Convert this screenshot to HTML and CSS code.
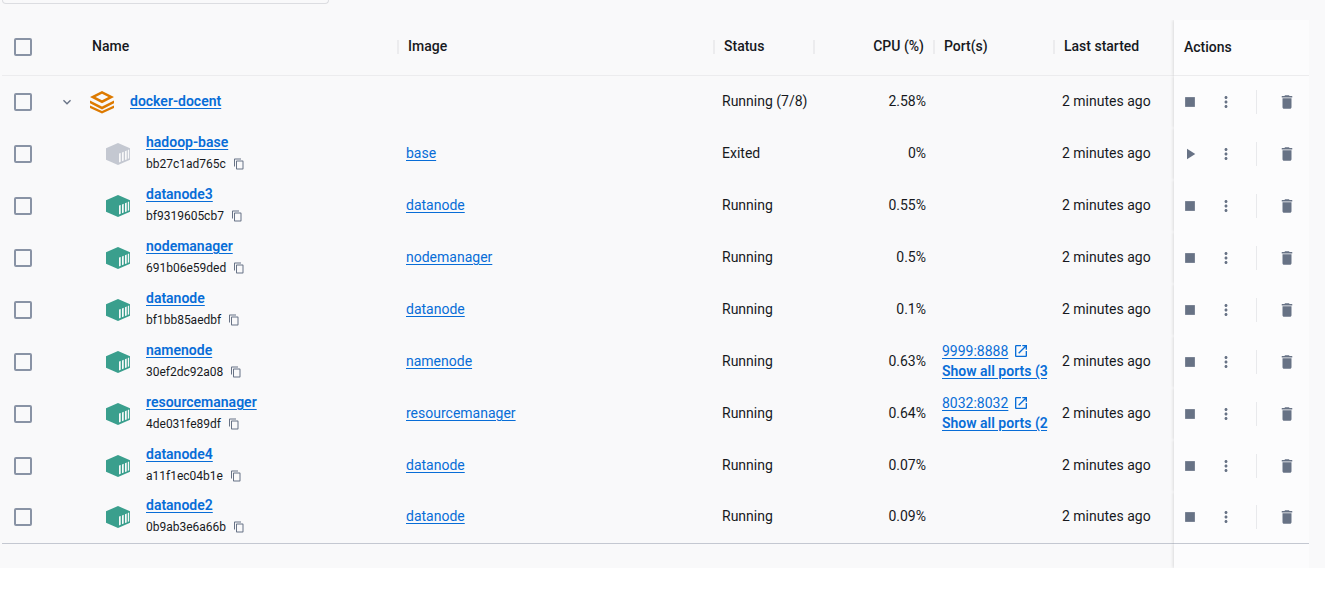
FILE: index.html
```html
<!DOCTYPE html>
<html lang="en">
<head>
<meta charset="utf-8">
<title>Containers</title>
<link rel="stylesheet" href="styles.css">
</head>
<body>
<svg class="sprite" aria-hidden="true">
  <symbol id="i-chevron" viewBox="0 0 24 24"><path d="M16.6 8.6 12 13.2 7.4 8.6 6 10l6 6 6-6z"/></symbol>
  <symbol id="i-stack" viewBox="0 0 24 24"><path fill-rule="evenodd" d="M12 1 24 7 12 13.2 0 7zM12 3.8 5.6 7 12 10.3 18.4 7zM0 10.6l12 6 12-6v2.7l-12 6.1-12-6.1zM0 15.4l12 5.5 12-5.5v2.7L12 23.600 0 18.100z"/></symbol>
  <symbol id="i-container" viewBox="0 0 24 24"><path fill-rule="evenodd" d="M12 1 24 6.300V17.700L12 23 0 17.700V6.300zM13 11.600v8.900l1.700-.7v-8.900zM16 10.400v8.900l1.700-.7V9.700zM19 9.200v8.900l1.700-.7V8.500zM21.800 8v8.900l1.300-.6V7.500z"/></symbol>
  <symbol id="i-copy" viewBox="0 0 24 24"><path d="M16 1H4c-1.100 0-2 .9-2 2v14h2V3h12zm3 4H8c-1.100 0-2 .9-2 2v14c0 1.100.9 2 2 2h11c1.100 0 2-.9 2-2V7c0-1.100-.9-2-2-2m0 16H8V7h11z"/></symbol>
  <symbol id="i-open" viewBox="0 0 24 24"><path d="M19 19H5V5h7V3H5c-1.100 0-2 .9-2 2v14c0 1.100.9 2 2 2h14c1.100 0 2-.9 2-2v-7h-2zM14 3v2h3.600l-9.800 9.800 1.400 1.400L19 6.400V10h2V3z"/></symbol>
  <symbol id="i-stop" viewBox="0 0 24 24"><path d="M5.500 5.500h13v13h-13z"/></symbol>
  <symbol id="i-play" viewBox="0 0 24 24"><path d="M8 5v14l11-7z"/></symbol>
  <symbol id="i-more" viewBox="0 0 24 24"><path d="M12 8c1.100 0 2-.9 2-2s-.9-2-2-2-2 .9-2 2 .9 2 2 2m0 2c-1.100 0-2 .9-2 2s.9 2 2 2 2-.9 2-2-.9-2-2-2m0 6c-1.100 0-2 .9-2 2s.9 2 2 2 2-.9 2-2-.9-2-2-2"/></symbol>
  <symbol id="i-trash" viewBox="0 0 24 24"><path d="M6 19c0 1.100.9 2 2 2h8c1.100 0 2-.9 2-2V7H6zM19 4h-3.500l-1-1h-5l-1 1H5v2h14z"/></symbol>
</svg>
<main class="panel">
  <div class="toolbar"><div class="search"></div></div>
  <table class="grid">
    <colgroup><col class="c-check"><col class="c-toggle"><col class="c-name"><col><col class="c-status"><col class="c-data"><col class="c-data"><col class="c-data"><col class="c-actions"></colgroup>
    <thead>
      <tr>
        <th class="check"><input type="checkbox" aria-label="Select all"></th>
        <th></th>
        <th><div class="head first">Name</div></th>
        <th><div class="head">Image</div></th>
        <th><div class="head">Status</div></th>
        <th><div class="head right">CPU (%)</div></th>
        <th><div class="head">Port(s)</div></th>
        <th><div class="head">Last started</div></th>
        <th class="actions-head">Actions</th>
      </tr>
    </thead>
    <tbody>
      <tr>
        <td class="check"><input type="checkbox" aria-label="Select docker-docent"></td>
        <td class="toggle"><button aria-label="Collapse"><svg class="s16"><use href="#i-chevron"/></svg></button></td>
        <td><div class="name"><svg class="s24 stack"><use href="#i-stack"/></svg><a class="strong group" href="#">docker-docent</a></div></td>
        <td></td><td class="text">Running (7/8)</td><td class="text cpu">2.58%</td><td></td><td class="text">2 minutes ago</td>
        <td class="actions"><div class="tools"><button aria-label="Stop"><svg class="s18"><use href="#i-stop"/></svg></button><button class="more" aria-label="More"><svg class="s18"><use href="#i-more"/></svg></button><span class="rule"></span><button aria-label="Delete"><svg class="s18"><use href="#i-trash"/></svg></button></div></td>
      </tr>
      <tr>
        <td class="check"><input type="checkbox" aria-label="Select hadoop-base"></td><td></td>
        <td><div class="name child"><svg class="s24 exited"><use href="#i-container"/></svg><div class="label"><a class="strong" href="#">hadoop-base</a><div class="id">bb27c1ad765c<button aria-label="Copy ID"><svg class="s12"><use href="#i-copy"/></svg></button></div></div></div></td>
        <td class="text"><a href="#">base</a></td><td class="text">Exited</td><td class="text cpu">0%</td><td></td><td class="text">2 minutes ago</td>
        <td class="actions"><div class="tools"><button aria-label="Start"><svg class="s18"><use href="#i-play"/></svg></button><button class="more" aria-label="More"><svg class="s18"><use href="#i-more"/></svg></button><span class="rule"></span><button aria-label="Delete"><svg class="s18"><use href="#i-trash"/></svg></button></div></td>
      </tr>
      <tr>
        <td class="check"><input type="checkbox" aria-label="Select datanode3"></td><td></td>
        <td><div class="name child"><svg class="s24 running"><use href="#i-container"/></svg><div class="label"><a class="strong" href="#">datanode3</a><div class="id">bf9319605cb7<button aria-label="Copy ID"><svg class="s12"><use href="#i-copy"/></svg></button></div></div></div></td>
        <td class="text"><a href="#">datanode</a></td><td class="text">Running</td><td class="text cpu">0.55%</td><td></td><td class="text">2 minutes ago</td>
        <td class="actions"><div class="tools"><button aria-label="Stop"><svg class="s18"><use href="#i-stop"/></svg></button><button class="more" aria-label="More"><svg class="s18"><use href="#i-more"/></svg></button><span class="rule"></span><button aria-label="Delete"><svg class="s18"><use href="#i-trash"/></svg></button></div></td>
      </tr>
      <tr>
        <td class="check"><input type="checkbox" aria-label="Select nodemanager"></td><td></td>
        <td><div class="name child"><svg class="s24 running"><use href="#i-container"/></svg><div class="label"><a class="strong" href="#">nodemanager</a><div class="id">691b06e59ded<button aria-label="Copy ID"><svg class="s12"><use href="#i-copy"/></svg></button></div></div></div></td>
        <td class="text"><a href="#">nodemanager</a></td><td class="text">Running</td><td class="text cpu">0.5%</td><td></td><td class="text">2 minutes ago</td>
        <td class="actions"><div class="tools"><button aria-label="Stop"><svg class="s18"><use href="#i-stop"/></svg></button><button class="more" aria-label="More"><svg class="s18"><use href="#i-more"/></svg></button><span class="rule"></span><button aria-label="Delete"><svg class="s18"><use href="#i-trash"/></svg></button></div></td>
      </tr>
      <tr>
        <td class="check"><input type="checkbox" aria-label="Select datanode"></td><td></td>
        <td><div class="name child"><svg class="s24 running"><use href="#i-container"/></svg><div class="label"><a class="strong" href="#">datanode</a><div class="id">bf1bb85aedbf<button aria-label="Copy ID"><svg class="s12"><use href="#i-copy"/></svg></button></div></div></div></td>
        <td class="text"><a href="#">datanode</a></td><td class="text">Running</td><td class="text cpu">0.1%</td><td></td><td class="text">2 minutes ago</td>
        <td class="actions"><div class="tools"><button aria-label="Stop"><svg class="s18"><use href="#i-stop"/></svg></button><button class="more" aria-label="More"><svg class="s18"><use href="#i-more"/></svg></button><span class="rule"></span><button aria-label="Delete"><svg class="s18"><use href="#i-trash"/></svg></button></div></td>
      </tr>
      <tr>
        <td class="check"><input type="checkbox" aria-label="Select namenode"></td><td></td>
        <td><div class="name child"><svg class="s24 running"><use href="#i-container"/></svg><div class="label"><a class="strong" href="#">namenode</a><div class="id">30ef2dc92a08<button aria-label="Copy ID"><svg class="s12"><use href="#i-copy"/></svg></button></div></div></div></td>
        <td class="text"><a href="#">namenode</a></td><td class="text">Running</td><td class="text cpu">0.63%</td>
        <td><div class="ports"><div class="port"><a href="#">9999:8888</a><svg class="s16"><use href="#i-open"/></svg></div><a class="strong" href="#">Show all ports (3)</a></div></td><td class="text">2 minutes ago</td>
        <td class="actions"><div class="tools"><button aria-label="Stop"><svg class="s18"><use href="#i-stop"/></svg></button><button class="more" aria-label="More"><svg class="s18"><use href="#i-more"/></svg></button><span class="rule"></span><button aria-label="Delete"><svg class="s18"><use href="#i-trash"/></svg></button></div></td>
      </tr>
      <tr>
        <td class="check"><input type="checkbox" aria-label="Select resourcemanager"></td><td></td>
        <td><div class="name child"><svg class="s24 running"><use href="#i-container"/></svg><div class="label"><a class="strong" href="#">resourcemanager</a><div class="id">4de031fe89df<button aria-label="Copy ID"><svg class="s12"><use href="#i-copy"/></svg></button></div></div></div></td>
        <td class="text"><a href="#">resourcemanager</a></td><td class="text">Running</td><td class="text cpu">0.64%</td>
        <td><div class="ports"><div class="port"><a href="#">8032:8032</a><svg class="s16"><use href="#i-open"/></svg></div><a class="strong" href="#">Show all ports (2)</a></div></td><td class="text">2 minutes ago</td>
        <td class="actions"><div class="tools"><button aria-label="Stop"><svg class="s18"><use href="#i-stop"/></svg></button><button class="more" aria-label="More"><svg class="s18"><use href="#i-more"/></svg></button><span class="rule"></span><button aria-label="Delete"><svg class="s18"><use href="#i-trash"/></svg></button></div></td>
      </tr>
      <tr>
        <td class="check"><input type="checkbox" aria-label="Select datanode4"></td><td></td>
        <td><div class="name child"><svg class="s24 running"><use href="#i-container"/></svg><div class="label"><a class="strong" href="#">datanode4</a><div class="id">a11f1ec04b1e<button aria-label="Copy ID"><svg class="s12"><use href="#i-copy"/></svg></button></div></div></div></td>
        <td class="text"><a href="#">datanode</a></td><td class="text">Running</td><td class="text cpu">0.07%</td><td></td><td class="text">2 minutes ago</td>
        <td class="actions"><div class="tools"><button aria-label="Stop"><svg class="s18"><use href="#i-stop"/></svg></button><button class="more" aria-label="More"><svg class="s18"><use href="#i-more"/></svg></button><span class="rule"></span><button aria-label="Delete"><svg class="s18"><use href="#i-trash"/></svg></button></div></td>
      </tr>
      <tr class="last">
        <td class="check"><input type="checkbox" aria-label="Select datanode2"></td><td></td>
        <td><div class="name child"><svg class="s24 running"><use href="#i-container"/></svg><div class="label"><a class="strong" href="#">datanode2</a><div class="id">0b9ab3e6a66b<button aria-label="Copy ID"><svg class="s12"><use href="#i-copy"/></svg></button></div></div></div></td>
        <td class="text"><a href="#">datanode</a></td><td class="text">Running</td><td class="text cpu">0.09%</td><td></td><td class="text">2 minutes ago</td>
        <td class="actions"><div class="tools"><button aria-label="Stop"><svg class="s18"><use href="#i-stop"/></svg></button><button class="more" aria-label="More"><svg class="s18"><use href="#i-more"/></svg></button><span class="rule"></span><button aria-label="Delete"><svg class="s18"><use href="#i-trash"/></svg></button></div></td>
      </tr>
    </tbody>
    <tfoot><tr><td colspan="8"></td><td class="actions"></td></tr></tfoot>
  </table>
</main>
</body>
</html>
```
FILE: styles.css
```css
* { box-sizing: border-box; }
body { margin: 0; background: #fff; color: #17191e; font: 14px/20px Roboto, sans-serif; }
.sprite { display: none; }
svg { display: block; flex: none; fill: currentColor; }
.s12 { width: 12px; height: 12px; }
.s16 { width: 16px; height: 16px; }
.s18 { width: 18px; height: 18px; }
.s24 { width: 24px; height: 24px; }

.panel { background: #f9f9fa; padding: 0 16px 0 2px; }
.toolbar { padding-bottom: 16px; }
.search { width: 25%; height: 4px; border: 1px solid #dcdde1; border-top: 0; border-radius: 0 0 4px 4px; }

.grid { width: 100%; table-layout: fixed; border-collapse: separate; border-spacing: 0; }
.c-check { width: 44px; }
.c-toggle { width: 42px; }
.c-name { width: 310px; }
.c-status { width: 100px; }
.c-data { width: 120px; }
.c-actions { width: 135px; }
th, td { padding: 0; text-align: left; vertical-align: middle; white-space: nowrap; }
th { height: 56px; padding-bottom: 2px; border-bottom: 1px solid #ececee; font-weight: 500; }
tbody td { height: 52px; }
.last td { padding-bottom: 2px; border-bottom: 1px solid #c4c8d1; }
tfoot td { height: 24px; }

.head { height: 14px; line-height: 12px; margin-left: -1px; padding-left: 9px; border-left: 2px solid #ececee; }
.head.first { border-left: 0; padding-left: 5px; }
.head.right { text-align: right; padding-right: 10px; }
.actions-head, .actions { background: #fcfcfd; box-shadow: -1px 0 3px rgba(0, 0, 0, .12); clip-path: inset(0 0 0 -4px); }
.actions-head { padding-left: 10px; }

.check { padding-left: 12px; }
input[type="checkbox"] { appearance: none; display: block; width: 18px; height: 18px; margin: 0; border: 2px solid #8993a5; border-radius: 2px; }
button { display: flex; align-items: center; justify-content: center; padding: 0; border: 0; background: none; color: #677285; }
.toggle button { width: 42px; height: 24px; }
a { color: #086dd7; text-decoration: underline; text-underline-offset: 2px; }
.strong { font-weight: 600; }
.text { padding: 0 8px 2px; }
.last .text { padding-bottom: 3px; }
.cpu { text-align: right; }

.name { display: flex; align-items: center; gap: 16px; padding-left: 2px; }
.name.child { padding-left: 18px; }
.group { padding-bottom: 2px; }
.label { display: grid; gap: 2px; padding-bottom: 2px; }
.stack { color: #dd7a00; }
.exited { color: #c4c8d1; }
.running { color: #3a9f8d; }
.id { display: flex; align-items: center; gap: 7px; font-size: 12px; line-height: 20px; }

/* Long port links are cut at the column edge. */
.ports { margin-right: 6px; padding: 0 0 2px 8px; overflow: hidden; }
.port { display: flex; align-items: center; gap: 5px; color: #086dd7; }

.tools { display: flex; align-items: center; }
.tools button { width: 32px; height: 32px; }
.tools .more { margin-left: 4px; }
.rule { width: 1px; height: 24px; margin: 0 14px; background: #e8e9ec; }
```
